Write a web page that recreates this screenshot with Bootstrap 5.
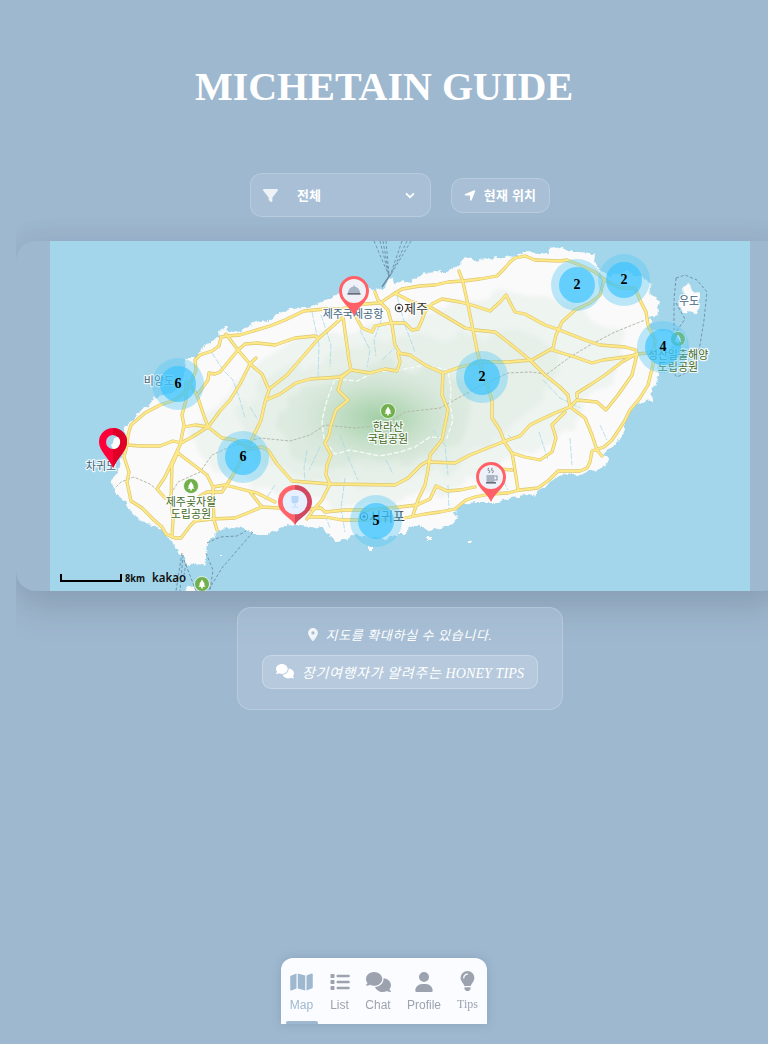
<!DOCTYPE html>
<html lang="ko">
<head>
<meta charset="utf-8">
<meta name="viewport" content="width=device-width, initial-scale=1">
<title>MICHETAIN GUIDE</title>
<link href="https://cdn.jsdelivr.net/npm/bootstrap@5.3.0/dist/css/bootstrap.min.css" rel="stylesheet">
<style>
body{background:#9eb8cf;font-family:"Liberation Serif","Noto Sans CJK KR",serif;height:1044px;overflow:hidden;color:#fff}
svg{display:block}
.title{font-size:40px;font-weight:700;line-height:48px;padding-top:63px;height:173px;white-space:nowrap}
.stage{margin-left:16px;width:768px;height:785px;overflow-x:clip}
.controls{height:44px;gap:20px}
.glass{background:rgba(180,199,222,.45);border:1px solid rgba(255,255,255,.2);font:600 13px "Liberation Sans","Noto Sans CJK KR",sans-serif}
.filter{width:181px;height:44px;border-radius:12px;padding:0 15px 0 12px}
.filter span{padding-left:19px}
.controls span{position:relative;top:-1px}
.locate{width:99px;height:35px;border-radius:12px;padding:0 1px 0 0;gap:8px;color:#fff;white-space:nowrap;letter-spacing:.2px}
.mapbox{height:350px;margin-top:24px;border-radius:20px;background:#9eb8cf;box-shadow:0 15px 40px rgba(0,0,0,.13),0 0 32px rgba(50,50,120,.06)}
.hint{width:326px;height:103px;margin:16px auto 0;border-radius:14px;padding-top:16px;font:italic 13px "Liberation Serif","Noto Sans CJK KR",serif;letter-spacing:.65px}
.hint .line1{height:20px;gap:8px}
.honey{width:276px;height:34px;margin-top:11px;border-radius:9px;background:rgba(255,255,255,.18);border:1px solid rgba(255,255,255,.24);gap:8px;font-size:14px;white-space:nowrap;padding-bottom:1px}
.honey em{letter-spacing:.1px}
.dock{width:206px;height:66px;bottom:20px;left:281px;background:#fafcff;border-radius:12px 12px 0 0;box-shadow:0 0 10px rgba(75,105,135,.25);font:12px "Liberation Sans",sans-serif;color:#9ca3af}
.dock a{color:#9ca3af;text-decoration:none;height:66px;padding-top:14px;gap:6px;line-height:14px}
.dock a.tips{padding-top:13px;font-family:"Liberation Serif",serif}
.dock a.active{color:#9eb8cf}
.dock .ln{height:3px;width:32px;left:5px;bottom:0;background:#9eb8cf;border-radius:2px 2px 0 0}
.lb{font:11px "Noto Sans CJK KR",sans-serif;text-anchor:middle;paint-order:stroke;stroke:#fff;stroke-width:2.4px;stroke-linejoin:round;stroke-opacity:.85}
.num{font:700 14px "Liberation Serif",serif;text-anchor:middle;fill:#000}
</style>
</head>
<body>
<h1 class="title text-center m-0">MICHETAIN GUIDE</h1>
<main class="stage">
  <div class="controls d-flex justify-content-center align-items-center">
    <div class="glass filter d-flex align-items-center">
      <svg width="15" height="15" viewBox="0 0 512 512" fill="#fff" opacity=".8"><path d="M3.9 54.9C10.5 40.9 24.5 32 40 32H472c15.5 0 29.5 8.9 36.1 22.9s4.6 30.5-5.2 42.5L320 320.9V448c0 12.1-6.8 23.2-17.7 28.6s-23.8 4.3-33.5-3l-64-48c-8.1-6-12.8-15.5-12.8-25.6V320.9L9 97.3C-.7 85.4-2.8 68.8 3.9 54.9z"/></svg>
      <span class="flex-grow-1">전체</span>
      <svg width="10" height="7" viewBox="0 0 10 7" fill="none" stroke="#fff" stroke-width="1.7"><path d="M1 1.3 5 5.2 9 1.3"/></svg>
    </div>
    <button class="glass locate d-flex align-items-center justify-content-center" type="button">
      <svg width="12" height="13" viewBox="0 0 448 512" fill="#fff"><path d="M429.600 92.100c4.900-11.900 2.100-25.600-7-34.700s-22.800-11.900-34.700-7l-352 144c-14.200 5.800-22.200 20.800-19.300 35.800s16.100 25.800 31.400 25.800H224V432c0 15.300 10.800 28.400 25.800 31.400s30-5.100 35.800-19.300l144-352z"/></svg>
      <span>현재 위치</span>
    </button>
  </div>

  <div class="mapbox d-flex justify-content-center">
  <svg width="700" height="350" viewBox="50 241 700 350">
    <defs>
      <filter id="coast" x="-5%" y="-5%" width="110%" height="110%"><feTurbulence type="fractalNoise" baseFrequency=".16" numOctaves="3" seed="4"/><feDisplacementMap in="SourceGraphic" scale="6" xChannelSelector="R" yChannelSelector="G"/></filter>
      <filter id="terrain" x="-10%" y="-10%" width="120%" height="120%"><feTurbulence type="fractalNoise" baseFrequency=".03" numOctaves="3" seed="9"/><feDisplacementMap in="SourceGraphic" scale="32" xChannelSelector="R" yChannelSelector="G"/><feGaussianBlur stdDeviation="2"/></filter>
      <radialGradient id="peak"><stop offset="0" stop-color="#9dcca2"/><stop offset=".35" stop-color="#b5d8b8" stop-opacity=".85"/><stop offset=".7" stop-color="#cfe3d2" stop-opacity=".5"/><stop offset="1" stop-color="#e2ece4" stop-opacity="0"/></radialGradient>
      <path id="land" d="M124 430 126 425 137 416 141 410 150 405 154 398 163 396 175 390 184 378 184 366 186 358 194 358 200 352 205 345 212 341 219 337 218 331 230 327 227 331 233 333 240 331 248 326 258 321 270 320 280 313 290 309 305 308 317 304 325 300 332 298 342 292 355 291 368 288 375 291 385 287 388 280 392 276 394 284 403 281 405 284 412 281 425 273 440 272 447 272 455 267 460 263 465 257 475 261 487 259 500 258 508 256 514 257 525 252 540 253 548 254 549 249 560 247 570 252 580 252 590 253 596 255 595 262 600 270 610 276 625 272 640 277 650 283 651 290 649 294 656 297 659 302 657 308 659 314 649 317 650 322 647 328 655 330 665 332 680 333 679 342 670 350 664 358 659 362 658 375 656 385 651 390 653 400 640 402 634 406 628 412 625 420 625 430 618 441 612 446 608 450 602 455 610 458 605 465 596 472 588 471 580 475 568 474 558 476 550 482 545 487 540 490 533 496 525 495 515 497 508 499 498 502 485 502 475 502 462 504 455 512 457 518 450 526 440 528 430 531 420 526 410 526 405 534 398 534 385 539 365 537 352 534 348 540 335 541 328 534 322 528 310 527 300 526 285 525 275 531 268 535 258 535 245 529 232 528 220 530 213 537 207 543 206 553 206 560 204 566 198 564 195 562 190 566 184 563 183 557 178 552 174 546 172 541 167 538 165 532 160 528 152 526 142 521 135 514 127 508 125 502 116 495 116 490 110 483 113 477 118 470 122 455 125 440Z"/>
      <clipPath id="inland"><use href="#land"/></clipPath>
      <g id="roads">
        <path d="M166 534 162 527 154 520 142 508 131 501 127 482 129 472 124 457 127 445 128 435 131 425 145 413 160 405 175 400 185 392 190 385 196 370 195 360 200 355 212 351 219 346 221 337 227 336 240 335 250 332 270 326 285 320 304 311 325 309 340 309 365 304 380 303 392 295 402 289 420 286 435 285 448 282 463 281 480 279 497 276 505 268 510 262 515 258 525 256 535 260 560 261 567 260 582 266 595 272 604 279 612 284 621 288 635 288 640 300 646 312 648 325 655 340 653 365 648 385 640 398 630 410 624 422 612 440 604 447 592 451 590 462 587 468 580 471 558 471 549 480 538 488 520 490 508 493 490 494 475 497 466 500 455 509 440 512 425 514 400 519 365 520 342 520 325 517 310 517"/>
        <path d="M166 534 175 538 181 538 190 526 195 521 212 519 235 518 250 512 262 507 280 508 308 509 321 508 325 512 345 510 370 510 400 507 417 505 430 499 436 486 447 491 460 490 475 487"/>
        <path d="M226 334 238 350 250 364 262 374 269 390 265 402 261 420 254 435 243 457 233 475 222 492 207 492 200 496"/>
        <path d="M238 350 245 344 257 343 275 345 295 338 315 336 319 338 300 360 287 375 269 389M238 350 220 372 215 374 209 373 208 380 198 394M256 358 250 364 240 384 230 400 220 411 208 427 192 437 181 443 173 441 160 446 140 446 127 445"/>
        <path d="M319 338 343 317 349 360 351 370 340 377 310 379 296 383 280 394 266 400M351 370 342 377 338 390 348 400 336 410 331 425 329 435 325 443 331 455 327 465 326 475 330 484 322 500 312 512 307 519"/>
        <path d="M351 370 370 373 385 369 397 371 400 362 398 353 410 355 425 365 443 373 442 395 448 410 445 425 442 440 430 455 428 470 425 485 418 500 413 515M443 373 460 367 482 362 508 362 532 360 553 348 556 335 562 322 575 310 590 303 600 295 604 280"/>
        <path d="M375 292 378 300 388 310 392 325 395 345 400 353M355 315 362 328 372 332 375 326 390 323 405 323 412 330 418 329 422 320 425 312 432 304 442 299 460 302 475 306 490 311 500 302 506 295 515 312 525 314 545 325 557 329 585 340 600 345 625 347 636 350 637 355 625 357 603 360 592 363 575 357 552 350M395 293 410 301 430 307 445 316 465 328 475 330 495 332 508 342 530 360 545 375 560 387 568 395 570 407 555 413 540 420 530 425 520 436 508 440 490 447 470 455 455 463 430 462"/>
        <path d="M459 271 463 282 468 305 473 330 477 350 482 370 492 400 492 418 500 430 505 443 512 453 515 470 518 490M512 453 525 457 540 460 552 452 556 438 552 425 565 412M570 407 585 418 592 435 597 450 602 456M570 407 577 400 597 402 606 410 618 395 625 385 632 375 637 354 648 353M577 397 577 393 590 385 605 375 622 362 636 354M500 469 512 470"/>
        <path d="M186 382 186 400 182 415 184 425 180 445 165 477 157 489 165 498M188 382 197 395 202 410 208 427 222 438 235 440 250 449 262 447 268 450 277 464 292 481 330 484 395 485 408 478 421 465 430 460M184 427 195 425 208 427M178 452 172 465 171 500 173 520 172 537M178 453 195 466 207 475 213 487 213 495 214 520 217 530M213 487 225 485 245 490 257 493 275 502M250 492 262 507M281 495 290 507"/>
      </g>
      <g id="tree"><circle r="7.500" fill="#72b04d" stroke="#fff" stroke-width=".7"/><path d="M0-4.500 3 .5H1.800L3.500 2.800H.8V4.500H-.8V2.800H-3.500L-1.800.5H-3Z" fill="#fff"/></g>
      <g id="dot"><circle r="26" fill="#59c8f5" opacity=".4"/><circle r="18" fill="#36c3ff" opacity=".65"/></g>
    </defs>
    <rect x="50" y="241" width="700" height="350" fill="#a3d6eb"/>
    <g filter="url(#coast)" fill="#fafafa">
      <use href="#land"/>
      <path d="M683 286 689 283 692 292 700 291 698 303 700 308 695 313 684 312 679 307 679 300 684 295ZM185 588 190 585 196 589 193 593 184 593ZM368 546h3v3h-3zM427 537h4v3h-4zM468 541h3v2h-3zM220 554h2v2h-2z"/>
    </g>
    <g clip-path="url(#inland)">
      <g filter="url(#terrain)">
        <path d="M190 440 225 390 270 350 340 330 430 315 500 290 560 300 625 330 630 365 590 390 560 440 490 470 410 500 330 505 250 485 210 470Z" fill="#edf3ef" opacity=".9"/>
        <path d="M235 420 275 375 345 350 440 335 520 330 560 350 550 400 510 430 430 475 330 490 265 465Z" fill="#e4efe7" opacity=".8"/>
        <path d="M275 425 300 390 350 370 430 365 475 390 470 430 410 460 330 470 290 450Z" fill="#d5e7d9" opacity=".65"/>
      </g>
      <ellipse cx="378" cy="418" rx="98" ry="58" fill="url(#peak)" opacity=".9"/>
      <g fill="none" stroke="#a9d8ea" stroke-width="1" opacity=".8" stroke-dasharray="6 1.500">
        <path d="M312 312 319 345 318 378M321 315 331 345 330 367M360 330 370 350 367 367M382 318 374 340 376 356M397 296 405 325 415 352M398 345 382 360M212 353 223 370 233 380 240 400 245 418M307 450 304 468 305 482M340 435 350 462 358 480M320 447 309 470M345 478 341 508 345 532M433 430 445 445 448 475M448 485 449 510M543 380 560 398 580 408M539 432 548 460M570 438 572 465M600 425 607 440M250 407 258 420M275 485 265 500M508 435 514 440M500 475 508 490M386 460 393 474M325 515 330 528"/>
      </g>
      <path d="M113 490 121 482 134 477 150 484 168 499 178 482 200 472 212 455 232 446 260 438 290 441 310 435 325 425 355 428 385 425 405 412 440 408 460 397 480 386 508 373 530 372 547 374 570 357 590 345 615 332 645 320" fill="none" stroke="#b4b9a9" stroke-width="1" stroke-dasharray="3 1.500"/>
      <path d="M335 379 357 381 375 372 400 370 425 365 448 370 451 390 450 405 453 420 447 438 430 437 415 447 400 452 380 456 365 453 350 450 335 454 324 440 322 420 327 400Z" fill="none" stroke="#f5fbf6" stroke-width="1.300" stroke-dasharray="5 2"/>
    </g>
    <use href="#roads" fill="none" stroke="#dbc872" stroke-width="3.300" stroke-linejoin="round" stroke-linecap="round"/>
    <use href="#roads" fill="none" stroke="#ffe886" stroke-width="2" stroke-linejoin="round" stroke-linecap="round"/>
    <g fill="none" stroke="#688aa0" stroke-width="1" stroke-dasharray="3 2" opacity=".85">
      <path d="M374 241 389 276M380 241 389 276M383 241 389 275M386 241 389 275M402 241 390 276M407 241 390 276M411 241 390 276"/>
      <path d="M676 278 685 275 697 280 707 292 704 320 700 345 692 370 677 377 668 366M676 278 674 300 674 330M676 303 685 319 676 332"/>
      <path d="M182 553 176 591M183 555 180 591M184 560 196 591M206 553 213 570 210 591M207 543 220 537 237 536 246 531M253 532 222 568 208 591M186 563 184 575"/>
    </g>
    <path d="M382 287 390 275" stroke="#688aa0" stroke-width="1.400"/>
    <use href="#tree" x="388" y="411"/><use href="#tree" x="191" y="486"/><use href="#tree" x="202" y="584"/><use href="#tree" x="678" y="339"/>
    <g class="lb">
      <g fill="#3e6480"><text x="353" y="318">제주국제공항</text><text x="159" y="384.500">비양도</text><text x="101" y="469.500">차귀도</text><text x="689" y="304.500">우도</text></g>
      <g fill="#426b26"><text x="388" y="431">한라산</text><text x="388" y="443">국립공원</text><text x="191" y="506">제주곶자왈</text><text x="191" y="518">도립공원</text><text x="678" y="359">성산일출해양</text><text x="678" y="371">도립공원</text></g>
      <g fill="#333"><text x="416" y="313" style="font-size:13px">제주</text><text x="387" y="521" style="font-size:13px">서귀포</text></g>
    </g>
    <g fill="#fff" stroke="#444" stroke-width="1.100"><circle cx="399" cy="308" r="3.700"/><circle cx="364" cy="516.500" r="3.700"/></g>
    <circle cx="399" cy="308" r="1.500" fill="#333"/><circle cx="364" cy="516.500" r="1.500" fill="#333"/>
    <g>
      <use href="#dot" x="577" y="285"/><use href="#dot" x="624" y="280"/><use href="#dot" x="663" y="347"/><use href="#dot" x="482" y="377"/><use href="#dot" x="178" y="384"/><use href="#dot" x="243" y="457"/><use href="#dot" x="376" y="521"/>
    </g>
    <g class="num"><text x="577" y="289">2</text><text x="624" y="284">2</text><text x="663" y="351">4</text><text x="482" y="381">2</text><text x="178" y="388">6</text><text x="243" y="461">6</text><text x="376" y="525">5</text></g>
    <!-- place pins -->
    <path fill-rule="evenodd" fill="#ff0038" d="M113 468C109 458 99 451 99 442a14 14 0 0 1 28 0C127 451 117 458 113 468ZM113 435a7 7 0 1 0 0 14a7 7 0 1 0 0-14Z"/>
    <path fill="#df0028" d="M113 468C117 458 127 451 127 442A14 14 0 0 0 113 428V435a7 7 0 0 1 0 14Z"/>
    <path fill="#fff" d="M113 449a7 7 0 0 0 5-12l-4 1-1 5-2 2Z"/>
    <path fill="#ff6166" d="M354 316C350 306 339 302 339 291a15 15 0 0 1 30 0C369 302 358 306 354 316Z"/><circle cx="354" cy="291" r="12" fill="#eef2f8"/>
    <path d="M348 293a6 6.500 0 0 1 12 0Z" fill="#a8b5c6"/><path d="M347.500 293h13v1.700h-13z" fill="#6a6e7c"/><path d="M353.300 285.500h1.500v2h-1.500z" fill="#a8b5c6"/>
    <path fill="#ff6166" d="M491 502C487 492 476 488 476 477a15 15 0 0 1 30 0C506 488 495 492 491 502Z"/><circle cx="491" cy="477" r="12" fill="#eef2f8"/>
    <path d="M486.500 475h8v5.500q0 2-2 2h-4q-2 0-2-2z" fill="#aab4c2"/><path d="M494.500 476h2.500v4h-2.500M489 468q-2 1.500 0 2.500t-.5 2.500M492.500 468q-2 1.500 0 2.500t-.5 2.500" fill="none" stroke="#8995a8" stroke-width="1.100"/><path d="M486 482h10v1.600h-10z" fill="#6a6e7c"/>
    <path fill="#ff6568" d="M295 525C292 518 278 514 278 502a17 17 0 0 1 17-17Z"/><path fill="#d1485f" d="M295 525C298 518 312 514 312 502a17 17 0 0 0-17-17Z"/><circle cx="295" cy="502" r="12.300" fill="#e7f0ff"/>
    <path d="M291.500 496h7v4q0 3-3.500 3.500t-3.500-3.500z" fill="#b6d7f5"/><path d="M294 503h2v4h-2zM291.500 506.500h7v1.500h-7z" fill="#d3e5fa"/>
    <path d="M61 574v7h60v-7" fill="none" stroke="#000" stroke-width="2"/>
    <text x="125" y="582" fill="#111" font-family="Noto Sans" font-size="10" font-weight="700" textLength="20" lengthAdjust="spacingAndGlyphs">8km</text>
    <text x="152" y="582" fill="#111" font-family="Noto Sans" font-size="13" font-weight="600" textLength="34" lengthAdjust="spacingAndGlyphs">kakao</text>
  </svg>
  </div>

  <section class="glass hint d-flex flex-column align-items-center">
    <div class="line1 d-flex align-items-center">
      <svg width="10" height="13" viewBox="0 0 384 512" fill="#fff" opacity=".85"><path d="M215.700 499.200C267 435 384 279.400 384 192C384 86 298 0 192 0S0 86 0 192c0 87.400 117 243 168.300 307.200c12.300 15.300 35.100 15.300 47.400 0zM192 128a64 64 0 1 1 0 128 64 64 0 1 1 0-128z"/></svg>
      <span>지도를 확대하실 수 있습니다.</span>
    </div>
    <div class="honey d-flex align-items-center justify-content-center">
      <svg width="18" height="14.400" viewBox="0 0 640 512" fill="#fff"><use href="#chatIcon"/></svg>
      <span>장기여행자가 알려주는 <em>HONEY TIPS</em></span>
    </div>
  </section>
</main>

<nav class="dock position-fixed">
  <div class="d-flex">
    <a class="active d-flex flex-column align-items-center" style="width:41px" href="#"><svg width="23" height="20" viewBox="0 0 576 512" fill="currentColor"><path d="M384 476.100L192 421.200V35.900L384 90.800V476.100zm32-1.200V88.400L543.100 37.500c15.800-6.300 32.900 5.300 32.900 22.300V394.600c0 9.800-6 18.600-15.100 22.300L416 474.800zM15.100 95.100L160 37.200V423.600L32.900 474.500C17.100 480.800 0 469.200 0 452.200V117.400c0-9.800 6-18.600 15.100-22.300z"/></svg>Map</a>
    <a class="d-flex flex-column align-items-center" style="width:35px" href="#"><svg width="20" height="20" viewBox="0 0 20 20" fill="currentColor"><rect x=".5" y="2" width="4" height="4" rx=".8"/><rect x=".5" y="8" width="4" height="4" rx=".8"/><rect x=".5" y="14" width="4" height="4" rx=".8"/><rect x="6.500" y="2.800" width="13.300" height="2.500" rx="1.200"/><rect x="6.500" y="8.800" width="13.300" height="2.500" rx="1.200"/><rect x="6.500" y="14.800" width="13.300" height="2.500" rx="1.200"/></svg>List</a>
    <a class="d-flex flex-column align-items-center" style="width:42px" href="#"><svg width="25" height="20" viewBox="0 0 640 512" fill="currentColor"><path id="chatIcon" d="M208 352c114.900 0 208-78.800 208-176S322.900 0 208 0S0 78.800 0 176c0 38.600 14.700 74.300 39.600 103.400c-3.500 9.400-8.700 17.700-14.200 24.700c-4.800 6.200-9.700 11-13.300 14.300c-1.800 1.600-3.300 2.900-4.300 3.700c-.5 .4-.9 .7-1.100 .8l-.2 .2C1 327.200-1.400 334.400 .8 340.900S9.100 352 16 352c21.800 0 43.800-5.600 62.100-12.500c9.200-3.500 17.800-7.400 25.300-11.400C134.100 343.300 169.800 352 208 352zM448 176c0 112.300-99.100 196.900-216.500 207C255.800 457.400 336.400 512 432 512c38.200 0 73.900-8.700 104.700-23.900c7.500 4 16 7.900 25.200 11.400c18.300 6.900 40.300 12.500 62.100 12.500c6.900 0 13.100-4.500 15.200-11.100c2.100-6.600-.2-13.800-5.800-17.900l-.2-.2c-.2-.2-.6-.4-1.100-.8c-1-.8-2.500-2-4.300-3.700c-3.600-3.300-8.500-8.100-13.300-14.300c-5.500-7-10.700-15.400-14.200-24.700c24.900-29 39.600-64.700 39.600-103.400c0-92.800-84.900-168.900-192.600-175.500c.4 5.100 .6 10.300 .6 15.500z"/></svg>Chat</a>
    <a class="d-flex flex-column align-items-center" style="width:50px" href="#"><svg width="18" height="20" viewBox="0 0 448 512" fill="currentColor"><path d="M224 256A128 128 0 1 0 224 0a128 128 0 1 0 0 256zm-45.700 48C79.800 304 0 383.800 0 482.300C0 498.700 13.300 512 29.700 512H418.300c16.400 0 29.700-13.300 29.700-29.700C448 383.800 368.200 304 269.700 304H178.300z"/></svg>Profile</a>
    <a class="tips d-flex flex-column align-items-center" style="width:37px" href="#"><svg width="15" height="20" viewBox="0 0 384 512" fill="currentColor"><path d="M272 384c9.600-31.900 29.500-59.100 49.200-86.200c5.200-7.100 10.400-14.200 15.400-21.400c19.800-28.500 31.400-63 31.400-100.300C368 78.800 289.200 0 192 0S16 78.800 16 176c0 37.300 11.600 71.900 31.400 100.300c5 7.200 10.200 14.300 15.400 21.400c19.800 27.100 39.700 54.400 49.200 86.200H272zM192 512c44.200 0 80-35.800 80-80V416H112v16c0 44.200 35.800 80 80 80zM112 176c0 8.800-7.200 16-16 16s-16-7.200-16-16c0-61.900 50.100-112 112-112c8.800 0 16 7.200 16 16s-7.200 16-16 16c-44.200 0-80 35.800-80 80z"/></svg>Tips</a>
  </div>
  <span class="ln position-absolute"></span>
</nav>
<script src="https://cdn.jsdelivr.net/npm/bootstrap@5.3.0/dist/js/bootstrap.bundle.min.js"></script>
</body>
</html>
